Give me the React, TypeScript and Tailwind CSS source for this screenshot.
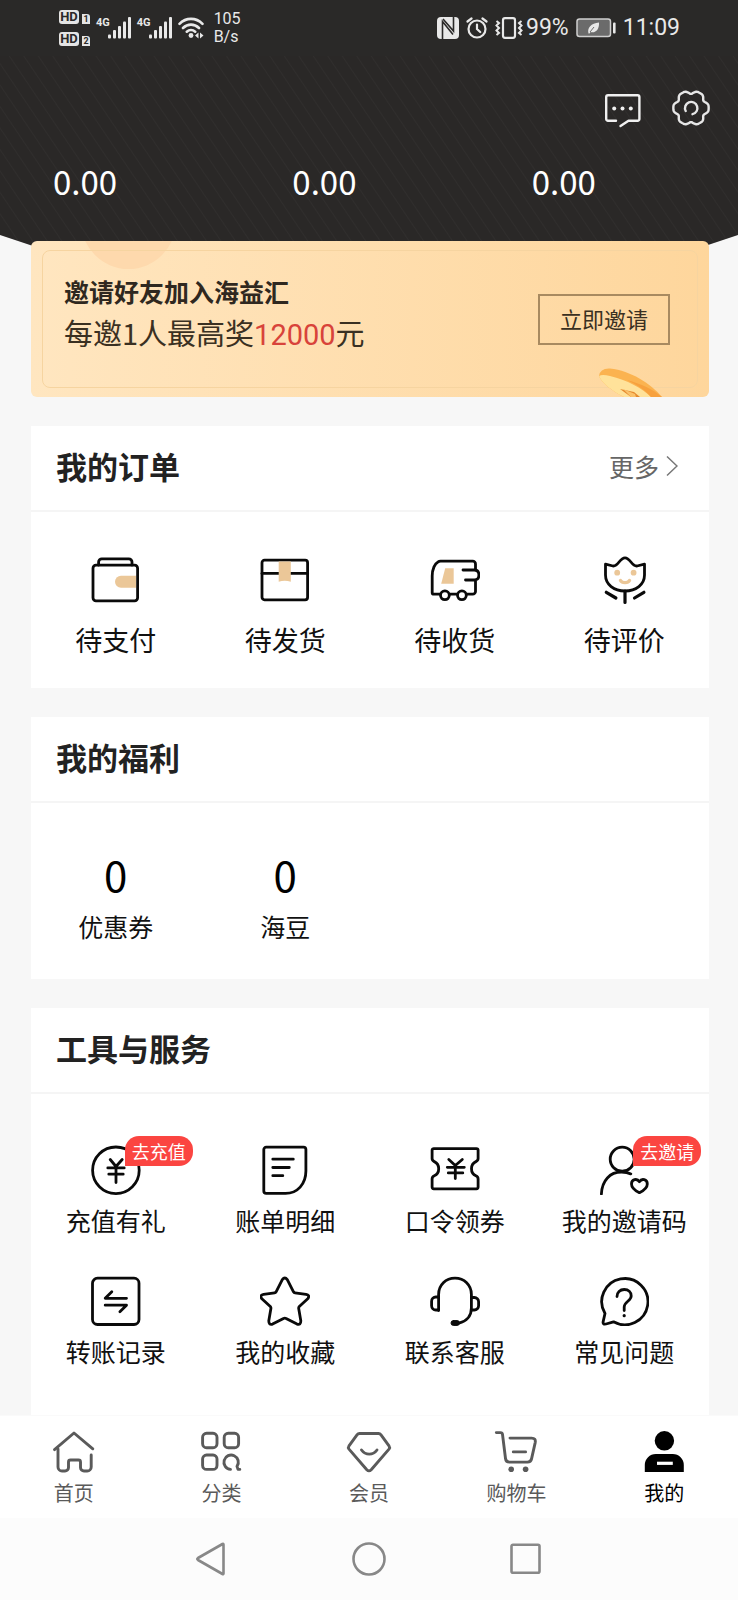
import React from 'react';

interface Item {
  label: string;
  icon: React.ReactNode;
  badge?: string;
}

const TAN = '#ebc798';

// Wavy six-lobed outline of the settings icon
const gearPoints = Array.from({ length: 90 }, (_, i) => {
  const a = (i * 4 * Math.PI) / 180;
  const r = 16.2 + 1.6 * Math.cos(6 * a) - 0.5 * Math.cos(12 * a);
  return `${(19 + r * 1.02 * Math.cos(a)).toFixed(2)},${(18 + r * Math.sin(a)).toFixed(2)}`;
}).join(' ');

const LineIcon = ({ children }: { children: React.ReactNode }) => (
  <svg
    className="w-[50px] h-[50px]"
    viewBox="0 0 50 50"
    fill="none"
    stroke="#0a0a0a"
    strokeWidth="2.8"
    strokeLinecap="round"
    strokeLinejoin="round"
    aria-hidden="true"
  >
    {children}
  </svg>
);

const TabIcon = ({ children }: { children: React.ReactNode }) => (
  <svg
    className="w-[42px] h-[42px] overflow-visible"
    viewBox="0 0 42 42"
    fill="none"
    stroke="#5a5a5a"
    strokeWidth="2.9"
    strokeLinecap="round"
    strokeLinejoin="round"
    aria-hidden="true"
  >
    {children}
  </svg>
);

const orders: Item[] = [
  {
    label: '待支付',
    icon: (
      <LineIcon>
        <path d="M24 26.7a6 6 0 0 1 6-6h15v12H30a6 6 0 0 1-6-6z" fill={TAN} stroke="none" />
        <rect x="2" y="10.2" width="44.6" height="35.6" rx="3" />
        <path d="M7.6 10V7a3.2 3.2 0 0 1 3.2-3.2h27A3.2 3.2 0 0 1 41 7v3" />
      </LineIcon>
    ),
  },
  {
    label: '待发货',
    icon: (
      <LineIcon>
        <rect x="2" y="5.2" width="45.6" height="39.6" rx="2.5" />
        <path d="M2 18.4h45.6" />
        <path d="M18.7 6.6h12.1v20.2q-6-2-12.1 0z" fill={TAN} stroke="none" />
      </LineIcon>
    ),
  },
  {
    label: '待收货',
    icon: (
      <LineIcon>
        <path d="M15.2 13.3h8.5v15.4H11.2z" fill={TAN} stroke="none" />
        <path d="M10.3 39.2H4a1.800 1.800 0 0 1-1.800-1.800V21C2.200 14 5 8.500 8 6.900Q9 6.200 10.500 6.200H42.700a2.800 2.800 0 0 1 2.800 2.800V15" />
        <path d="M33 15h11.500c2.700 0 4.400 2 4.400 5s-1.700 5-4.400 5H35.500M45.500 25v11.400a2.800 2.800 0 0 1-2.800 2.800H36.500M19.500 39.200h8" />
        <circle cx="14.900" cy="40.300" r="4.400" />
        <circle cx="31.900" cy="40.300" r="4.400" />
      </LineIcon>
    ),
  },
  {
    label: '待评价',
    icon: (
      <LineIcon>
        <path d="M6.500 9.200l7.500 1.800c5.500.5 6.500-8.200 12-8.200s6.500 8.700 12 8.200l7.500-1.800V20c0 9.500-8.500 16-19.500 16S6.500 29.500 6.500 20z" />
        <circle cx="18.200" cy="17.700" r="2.900" fill={TAN} stroke="none" />
        <circle cx="34.600" cy="17.700" r="2.900" fill={TAN} stroke="none" />
        <path d="M21.500 25.500c1.500 2.800 7.500 2.800 9 0" stroke={TAN} strokeWidth="3.400" />
        <path d="M26 36v11.500M7.300 37.300l9.600 5.700M44.900 37.300l-9.400 5.700" strokeWidth="3.200" />
      </LineIcon>
    ),
  },
];

const benefits = [
  { label: '优惠券', value: 0 },
  { label: '海豆', value: 0 },
];

const services: Item[] = [
  {
    label: '充值有礼',
    badge: '去充值',
    icon: (
      <LineIcon>
        <circle cx="24.900" cy="25.300" r="23.300" />
        <path d="M19.200 14.500l5.800 7 6.200-7M25 21.500v16M16.800 22.900h16.400M17.800 29.200h14.400" />
      </LineIcon>
    ),
  },
  {
    label: '账单明细',
    icon: (
      <LineIcon>
        <path d="M6.200 2.200H43.500a2.400 2.400 0 0 1 2.400 2.400V26c0 13-8.500 22.400-20.400 22.400H6.200A2.400 2.400 0 0 1 3.800 46V4.600a2.400 2.400 0 0 1 2.400-2.400z" />
        <path d="M12.800 14.200h20.500M12.800 22.500h16.500M12.800 30.700h10" />
      </LineIcon>
    ),
  },
  {
    label: '口令领券',
    icon: (
      <LineIcon>
        <path d="M3.800 3.600H46.400a1.700 1.700 0 0 1 1.700 1.700V13.500c0 2-.6 2.400-2.200 3.100-2.900 1.300-4.400 4-4.400 7.100s1.500 5.800 4.400 7.100c1.600.7 2.200 1.100 2.200 3.100v8.200a1.700 1.700 0 0 1-1.700 1.700H3.800a1.700 1.700 0 0 1-1.700-1.700v-8.200c0-2 .6-2.400 2.200-3.100 2.900-1.300 4.400-4 4.400-7.100s-1.500-5.800-4.400-7.100c-1.600-.7-2.200-1.100-2.200-3.100V5.300a1.700 1.700 0 0 1 1.700-1.700z" />
        <path d="M18.800 14.500l6.500 6 7-6M25.300 20.500v13M17.300 22.300h17M18.300 27.900h14.500" />
      </LineIcon>
    ),
  },
  {
    label: '我的邀请码',
    badge: '去邀请',
    icon: (
      <LineIcon>
        <circle cx="23.200" cy="14.200" r="12" />
        <path d="M2.400 49C3 35.500 11 27 22.500 27c3.800 0 6.800.6 9.300 1.900" />
        <path d="M40.400 47.700c-4.500-2.200-7.900-5-7.900-8.700 0-4.700 5.500-6 7.900-2.300 2.400-3.700 7.900-2.400 7.900 2.300 0 3.700-3.400 6.500-7.900 8.700z" />
      </LineIcon>
    ),
  },
  {
    label: '转账记录',
    icon: (
      <LineIcon>
        <rect x="1.500" y="2.200" width="46.500" height="46.300" rx="5" />
        <path d="M35.500 22.300H14.200l6.600-6.600M14.200 29.200h21.300l-6.600 6.600" />
      </LineIcon>
    ),
  },
  {
    label: '我的收藏',
    icon: (
      <LineIcon>
        <path d="M22.300 3.600q2.500-3.200 5 0l6.200 12.200q.5.900 1.500 1l11 1.500q4 .8 2 4.100l-8.700 8.100q-.8.900-.6 2l2.100 12.300q.1 4.600-3.800 3.300l-10.900-5.700q-1.300-.6-2.600 0l-10.900 5.700q-3.900 1.300-3.800-3.300l2.100-12.300q.2-1.100-.6-2L1.600 22.400q-2-3.300 2-4.100l11-1.500q1-.1 1.500-1z" />
      </LineIcon>
    ),
  },
  {
    label: '联系客服',
    icon: (
      <LineIcon>
        <path d="M8.600 34.500V18.500C8.600 9 15.800 2.200 25 2.200S41.400 9 41.400 18.500V32c0 8-5 13.500-12.500 15.200" />
        <path d="M8.600 21H5.800a4.200 4.200 0 0 0-4.200 4.200v4.600A4.200 4.200 0 0 0 5.800 34h2.800M41.400 21.500h3a4.200 4.200 0 0 1 4.200 4.200v4.100a4.200 4.200 0 0 1-4.200 4.200h-3" />
        <rect x="21" y="44.600" width="8.500" height="4.800" rx="2.400" fill="#0a0a0a" strokeWidth="1" />
      </LineIcon>
    ),
  },
  {
    label: '常见问题',
    icon: (
      <LineIcon>
        <path d="M6 37.500A23.100 23.100 0 1 1 14.500 45.800L7 48Q3.600 48.700 4.100 45.900z" />
        <path d="M18 20.500c0-4 3-7 7.200-7s7 2.800 7 6.500c0 5-7 5.500-7 11v3.500" />
        <circle cx="25.200" cy="39.700" r="1.600" fill="#0a0a0a" stroke="none" />
      </LineIcon>
    ),
  },
];

const tabs: Item[] = [
  {
    label: '首页',
    icon: (
      <TabIcon>
        <path d="M1.500 18.600L21 2l18.800 15.800" />
        <path d="M5 18v18a4 4 0 0 0 4 4h3a3.500 3.500 0 0 0 3.500-3.500V31a2 2 0 0 1 2-2h8a2 2 0 0 1 2 2v5.500A3.500 3.500 0 0 0 31 40h3.200a4 4 0 0 0 4-4V24" />
      </TabIcon>
    ),
  },
  {
    label: '分类',
    icon: (
      <TabIcon>
        <rect x="2.600" y="2.300" width="14.400" height="14.400" rx="4" />
        <rect x="24.200" y="2.300" width="14.400" height="14.400" rx="4" />
        <rect x="2.600" y="24" width="14.400" height="14.400" rx="4" />
        <path d="M30.500 38.400a7.200 7.200 0 1 1 6.500-3l1 3h1.800" />
      </TabIcon>
    ),
  },
  {
    label: '会员',
    icon: (
      <TabIcon>
        <path d="M11.500 2.500h19q1.500 0 2.500 1.300l8 11q1.200 1.700 0 3.300L23.200 38.800q-2.200 2.200-4.400 0L1 18.100q-1.200-1.600 0-3.300l8-11q1-1.300 2.500-1.300z" />
        <path d="M13.500 19c4 5.500 11.500 5.500 15.500 0" />
      </TabIcon>
    ),
  },
  {
    label: '购物车',
    icon: (
      <TabIcon>
        <path d="M.3 1.600h4.200q1.800 0 2 1.800l3 24.100q.4 3.600 4 3.600h17.900q3.500 0 4.200-3.500l3.600-16q.8-4.500-3.500-4.500H14" />
        <path d="M17.300 20.900h12.300" />
        <circle cx="15.200" cy="38.300" r="2.800" fill="#5a5a5a" stroke="none" />
        <circle cx="29.600" cy="38.300" r="2.800" fill="#5a5a5a" stroke="none" />
      </TabIcon>
    ),
  },
  {
    label: '我的',
    icon: (
      <TabIcon>
        <circle cx="21.400" cy="9.800" r="9.700" fill="#000" stroke="none" />
        <path d="M1.800 41v-7a11 11 0 0 1 11-11h17a11 11 0 0 1 11 11v7z" fill="#000" stroke="none" />
        <path d="M14 30.700h15.800v3.200H14z" fill="#fff" stroke="none" />
      </TabIcon>
    ),
  },
];

const HdBadge = ({ sim }: { sim: number }) => (
  <span className="flex items-end gap-[3px] text-[#2a2928] font-bold">
    <span className="w-5 rounded-[3px] bg-[#e4e4e4] text-center text-[13px] leading-[14px]">HD</span>
    <span className="w-2 rounded-tr-[3px] bg-[#e4e4e4] text-center text-[9px] leading-[10px]">{sim}</span>
  </span>
);

const Signal = () => (
  <span className="flex">
    <span className="text-[11px] leading-[12px] font-bold">4G</span>
    <svg className="w-[23px] h-[22px] -ml-[2px]" viewBox="0 0 23 22" fill="#e8e8e8" aria-hidden="true">
      <rect x="0" y="17.500" width="3" height="4" rx="1" />
      <rect x="5" y="13" width="3" height="8.500" rx="1" />
      <rect x="10" y="9" width="3" height="12.500" rx="1" />
      <rect x="15" y="4.500" width="3" height="17" rx="1" />
      <rect x="20" y="0" width="3" height="21.500" rx="1" />
    </svg>
  </span>
);

const StatusBar = () => (
  <div className="flex items-center justify-between bg-[#2a2928] py-[10px] pl-[59px] pr-[58px] font-[Roboto,sans-serif] text-[#e8e8e8]">
    <div className="flex items-center gap-[6px]">
      <div className="flex flex-col gap-2">
        <HdBadge sim={1} />
        <HdBadge sim={2} />
      </div>
      <Signal />
      <Signal />
      <svg className="w-[26px] h-[22px]" viewBox="0 0 26 22" fill="none" stroke="#e8e8e8" strokeWidth="2.600" strokeLinecap="round" aria-hidden="true">
        <path d="M1.500 6.800C8 .2 18 .2 24.500 6.800M5 11c4.700-4.500 11.300-4.500 16 0M8.800 14.700c2.500-2.200 5.900-2.200 8.400 0" />
        <circle cx="13" cy="18.500" r="2.400" fill="#e8e8e8" stroke="none" />
        <path d="M20.500 15.500v6l-3.500-3zM22 15.500v6l3.500-3z" fill="#e8e8e8" stroke="none" />
      </svg>
      <div className="ml-1 text-base leading-[18px]">
        <p>105</p>
        <p>B/s</p>
      </div>
    </div>
    <div className="flex items-center gap-[7px]">
      <svg className="w-[22px] h-[22px]" viewBox="0 0 22 22" aria-hidden="true">
        <path d="M4 0h14a4 4 0 0 1 4 4v14a4 4 0 0 1-4 4H4a4 4 0 0 1-4-4V4a4 4 0 0 1 4-4z" fill="#e8e8e8" />
        <path d="M5.500 22V4.500L16 17.500M6 2l10.500 12V0" stroke="#2a2928" strokeWidth="1.600" fill="none" />
      </svg>
      <svg className="w-[22px] h-[22px]" viewBox="0 0 22 22" fill="none" stroke="#e8e8e8" strokeWidth="2.200" strokeLinecap="round" aria-hidden="true">
        <circle cx="11" cy="12" r="8.500" />
        <path d="M11 7.500V12l3.200 3M1.500 4.500l4-3M20.500 4.500l-4-3" />
      </svg>
      <div className="flex items-center gap-[3px]">
        <svg className="w-[28px] h-[22px]" viewBox="0 0 28 22" fill="none" stroke="#e8e8e8" strokeWidth="2.200" aria-hidden="true">
          <rect x="8" y="1.200" width="12" height="19.600" rx="2" />
          <path d="M1.500 4l2.500 2-2.500 2.500L4 11l-2.500 2.500L4 16l-2.500 2M26.500 4L24 6l2.500 2.500L24 11l2.500 2.500L24 16l2.500 2" strokeWidth="2" />
        </svg>
        <span className="text-[23px] leading-[28px]">99%</span>
      </div>
      <svg className="w-10 h-[20px]" viewBox="0 0 40 20" aria-hidden="true">
        <rect x="1" y="1" width="33.500" height="17.500" rx="2.500" fill="#6b6b6b" stroke="#cfcfcf" strokeWidth="1.500" />
        <rect x="37" y="4.500" width="2.600" height="11" rx="1" fill="#e8e8e8" />
        <path d="M12.500 15.500c-1.500-6 2.500-10 10.500-11 .5 7-3.500 11-8.500 9.500l-1 1.500z" fill="#e8e8e8" />
        <path d="M14 14l4-5" stroke="#6b6b6b" strokeWidth="1" />
      </svg>
      <span className="text-[23px] leading-[28px]">11:09</span>
    </div>
  </div>
);

const Header = () => (
  <header className="bg-[repeating-linear-gradient(56deg,#2a2827_0px,#2a2827_10px,#302e2d_11px,#2a2827_12px)] pt-[34px] pb-[52px] [clip-path:polygon(0_0,100%_0,100%_179px,calc(100%-60px)_100%,60px_100%,0_179px)]">
    <div className="flex items-start justify-end gap-[31px] pr-7">
      <button type="button" aria-label="消息" className="pt-1">
        <svg className="w-9 h-[34px]" viewBox="0 0 36 34" fill="none" stroke="#f0f0f0" strokeWidth="2.400" strokeLinecap="round" strokeLinejoin="round" aria-hidden="true">
          <path d="M11 26.700H3a1.800 1.800 0 0 1-1.800-1.800V3A1.800 1.800 0 0 1 3 1.200h29.600A1.800 1.800 0 0 1 34.400 3v21.900a1.800 1.800 0 0 1-1.800 1.800H23.500L15.500 32" />
          <g fill="#f0f0f0" stroke="none">
            <circle cx="9.200" cy="14.600" r="2" />
            <circle cx="17.500" cy="14.600" r="2" />
            <circle cx="25.800" cy="14.600" r="2" />
          </g>
        </svg>
      </button>
      <button type="button" aria-label="设置">
        <svg className="w-[38px] h-9" viewBox="0 0 38 36" fill="none" stroke="#e6e6e6" strokeWidth="2.400" strokeLinecap="round" strokeLinejoin="round" aria-hidden="true">
          <polygon points={gearPoints} />
          <path d="M13.700 21A6.200 6.200 0 1 1 20.500 24.200" />
        </svg>
      </button>
    </div>
    <div className="mx-[10px] mt-[31px] grid grid-cols-3 text-[33px] leading-[44px] text-white">
      <span className="pl-[43px]">0.00</span>
      <span className="pl-[43px]">0.00</span>
      <span className="pl-[43px]">0.00</span>
    </div>
  </header>
);

const InviteBanner = () => (
  <section className="relative -mt-[14px] flex items-center justify-between overflow-hidden rounded-md bg-gradient-to-r from-[#ffe6c0] to-[#fed69c] pr-[39px] pl-[33px]">
    {/* Decorations */}
    <div className="absolute -top-[67px] left-[50px] h-[95px] w-[95px] rounded-full bg-[#fed9ad]" />
    <div className="absolute inset-x-[11px] inset-y-[9px] rounded-lg border border-[#f6d4a0]" />
    <svg className="absolute right-[46px] bottom-0 h-[29px] w-[64px]" viewBox="0 0 64 29" aria-hidden="true">
      <path d="M0 8Q1 0 11 .5C32 3 51 15 63 29H25C13 23 3 15 0 8z" fill="#fbb350" />
      <path d="M0 8Q3 6 11 8C28 12 43 20 52 29H25C13 23 3 15 0 8z" fill="#ffe29a" />
      <path d="M52 29C46 22 38 17 28 12c14 4 26 9 35 17z" fill="#f7a13e" />
      <path d="M21 21l14 3 6 5h-9z" fill="#e58a2e" />
      <path d="M24 21l12 5 1 3h-5z" fill="#fbc26a" />
    </svg>

    <div className="relative pt-[31px] pb-[43px]">
      <h2 className="text-[25px] leading-[38px] font-bold text-[#2f2820]">邀请好友加入海益汇</h2>
      <p className="text-[29px] leading-[44px] text-[#3a3022]">
        每邀1人最高奖<span className="font-[Roboto,sans-serif] leading-none text-[#d8433a]">12000</span>元
      </p>
    </div>
    <button type="button" className="relative border-2 border-[#a88a60] px-5 pt-[7px] pb-[9px] text-[22px] leading-[31px] text-[#3a3022]">
      立即邀请
    </button>
  </section>
);

const Card = ({ title, more, children }: { title: string; more?: React.ReactNode; children: React.ReactNode }) => (
  <section className="bg-white">
    <div className="flex items-center justify-between border-b-2 border-[#f5f5f5] pt-5 pr-[31px] pb-6 pl-[25px]">
      <h2 className="text-[31px] leading-[40px] font-bold text-[#222]">{title}</h2>
      {more}
    </div>
    {children}
  </section>
);

export default function App() {
  return (
    <div className="flex min-h-screen flex-col bg-[#f7f7f7] font-['Noto_Sans_CJK_SC',sans-serif] text-[#111]">
      <StatusBar />
      <Header />

      <main className="flex flex-1 flex-col gap-[29px] pr-[29px] pl-[31px]">
        <InviteBanner />

        {/* Orders */}
        <Card
          title="我的订单"
          more={
            <a href="#orders" className="flex items-center gap-[7px] text-[25px] leading-[36px] text-[#666]">
              更多
              <svg className="h-[22px] w-[12px]" viewBox="0 0 12 22" fill="none" stroke="#777" strokeWidth="1.500" aria-hidden="true">
                <path d="M1 1.500L11 11 1 20.500" />
              </svg>
            </a>
          }
        >
          <div className="grid grid-cols-4 pt-[43px] pb-7">
            {orders.map((item) => (
              <a key={item.label} href="#orders" className="flex flex-col items-center gap-[15px]">
                {item.icon}
                <span className="text-[27px] leading-[40px]">{item.label}</span>
              </a>
            ))}
          </div>
        </Card>

        {/* Benefits */}
        <Card title="我的福利">
          <div className="grid grid-cols-4 pt-[47px] pb-[35px]">
            {benefits.map((item) => (
              <a key={item.label} href="#benefits" className="flex flex-col items-center gap-[10px]">
                <span className="text-[42px] leading-[48px] text-black">{item.value}</span>
                <span className="text-[25px] leading-[36px]">{item.label}</span>
              </a>
            ))}
          </div>
        </Card>

        {/* Tools */}
        <Card title="工具与服务">
          <div className="grid grid-cols-4 gap-y-[38px] pt-[51px] pb-[46px]">
            {services.map((item) => (
              <a key={item.label} href="#services" className="relative flex flex-col items-center gap-[7px]">
                {item.icon}
                <span className="text-[25px] leading-[36px] whitespace-nowrap">{item.label}</span>
                {item.badge && (
                  <span className="absolute -top-[9px] left-1/2 ml-[9px] rounded-[14px] rounded-bl-none bg-[#fb4541] px-[7px] text-[18px] leading-[30px] whitespace-nowrap text-white">
                    {item.badge}
                  </span>
                )}
              </a>
            ))}
          </div>
        </Card>
      </main>

      <nav className="grid grid-cols-5 border-t border-[#fafafa] bg-white pt-[15px] pb-[11px]">
        {tabs.map((tab) => (
          <a
            key={tab.label}
            href="#tab"
            className={`flex flex-col items-center gap-[6px] text-[20px] leading-[28px] ${tab.label === '我的' ? 'text-black' : 'text-[#5a5a5a]'}`}
          >
            {tab.icon}
            {tab.label}
          </a>
        ))}
      </nav>

      {/* System navigation */}
      <div className="flex justify-center gap-[123px] bg-[#fcfcfc] py-6">
        <button type="button" aria-label="返回">
          <svg className="h-[34px] w-[34px]" viewBox="0 0 34 34" fill="none" stroke="#888" strokeWidth="2.600" strokeLinejoin="round" aria-hidden="true">
            <path d="M28.500 2.500v29q0 1-1 .5L3 18q-1.500-1 0-2L27.500 2q1-.5 1 .5z" />
          </svg>
        </button>
        <button type="button" aria-label="主页">
          <svg className="h-[34px] w-[34px]" viewBox="0 0 34 34" fill="none" stroke="#888" strokeWidth="2.600" aria-hidden="true">
            <circle cx="17" cy="17" r="15.500" />
          </svg>
        </button>
        <button type="button" aria-label="最近任务">
          <svg className="h-[34px] w-[34px]" viewBox="0 0 34 34" fill="none" stroke="#888" strokeWidth="2.600" aria-hidden="true">
            <rect x="2.500" y="2.800" width="28" height="28" rx="1.500" />
          </svg>
        </button>
      </div>
    </div>
  );
}
